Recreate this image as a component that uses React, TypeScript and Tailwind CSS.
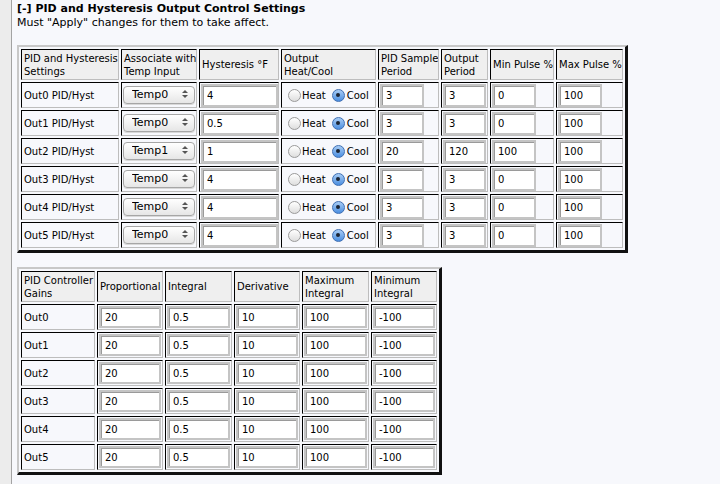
import React from 'react';

type HystRow = {
  name: string;
  temp: string;
  hyst: string;
  sample: string;
  period: string;
  min: string;
  max: string;
};

const hystRows: HystRow[] = [
  { name: 'Out0 PID/Hyst', temp: 'Temp0', hyst: '4', sample: '3', period: '3', min: '0', max: '100' },
  { name: 'Out1 PID/Hyst', temp: 'Temp0', hyst: '0.5', sample: '3', period: '3', min: '0', max: '100' },
  { name: 'Out2 PID/Hyst', temp: 'Temp1', hyst: '1', sample: '20', period: '120', min: '100', max: '100' },
  { name: 'Out3 PID/Hyst', temp: 'Temp0', hyst: '4', sample: '3', period: '3', min: '0', max: '100' },
  { name: 'Out4 PID/Hyst', temp: 'Temp0', hyst: '4', sample: '3', period: '3', min: '0', max: '100' },
  { name: 'Out5 PID/Hyst', temp: 'Temp0', hyst: '4', sample: '3', period: '3', min: '0', max: '100' },
];

const gainRows = ['Out0', 'Out1', 'Out2', 'Out3', 'Out4', 'Out5'].map(name => ({
  name,
  p: '20',
  i: '0.5',
  d: '10',
  max: '100',
  min: '-100',
}));

// inset-looking cell borders, like an old border="1" table
const cell =
  'p-0 align-middle whitespace-nowrap overflow-hidden border border-t-black border-l-black border-r-[#bdbdbd] border-b-[#bdbdbd]';
const headCell = `${cell} bg-[#efefef] pl-[2px] text-left font-normal leading-[13px]`;
const outerTable =
  'border-separate border-spacing-[2px] table-fixed border-t-2 border-l-2 border-r-[3px] border-b-[3px] border-t-[#c8c8c8] border-l-[#c8c8c8] border-r-[#111] border-b-[#111]';

const TextBox: React.FC<{ value: string; w: string; h?: string }> = ({ value, w, h = 'h-[23px]' }) => (
  <input
    type="text"
    defaultValue={value}
    className={`${w} ${h} block bg-white border-2 border-[#c4c4c4] shadow-[inset_1px_1px_0_#9a9a9a] pl-[4px] text-[10px] text-black outline-none`}
  />
);

const Radio: React.FC<{ checked?: boolean }> = ({ checked }) =>
  checked ? (
    <span className="w-[13px] h-[13px] rounded-full border border-[#3f6fb3] bg-gradient-to-b from-[#a9cdf5] to-[#4a8ee0] flex items-center justify-center shrink-0">
      <span className="w-[4px] h-[4px] rounded-full bg-[#1b2433]" />
    </span>
  ) : (
    <span className="w-[13px] h-[13px] rounded-full border border-[#9a9a9a] bg-gradient-to-b from-white to-[#dedede] shrink-0" />
  );

const TempSelect: React.FC<{ value: string }> = ({ value }) => (
  <div className="relative mx-auto w-[72px] h-[18px]">
    <select
      defaultValue={value}
      className="appearance-none w-full h-full rounded-[4px] border border-[#a6a6a6] bg-gradient-to-b from-white to-[#e6e6e6] pl-[8px] text-[11px] leading-[16px] text-black shadow-[0_1px_0_#d8d8d8] outline-none"
    >
      <option>Temp0</option>
      <option>Temp1</option>
    </select>
    <span className="pointer-events-none absolute right-[7px] top-[4px] flex flex-col gap-[2px]">
      <span className="w-0 h-0 border-x-[3px] border-x-transparent border-b-[3px] border-b-[#555]" />
      <span className="w-0 h-0 border-x-[3px] border-x-transparent border-t-[3px] border-t-[#555]" />
    </span>
  </div>
);

const App: React.FC = () => {
  return (
    <div className="w-[720px] h-[484px] overflow-hidden flex bg-[#f7f8fc] text-black font-['DejaVu_Sans',Verdana,sans-serif]">
      <div className="w-[12px] shrink-0 bg-[#ececec] border-r border-[#a3a3a3]" />

      <div className="pl-[5px] pt-[2px]">
        <h1 className="text-[11px] leading-[14px] font-bold">[-] PID and Hysteresis Output Control Settings</h1>
        <p className="text-[11px] leading-[14px]">Must "Apply" changes for them to take affect.</p>

        {/* PID / hysteresis table */}
        <table className={`${outerTable} w-[611px] mt-[15px] text-[10px]`}>
          <thead>
            <tr className="h-[31px]">
              <th className={`${headCell} w-[98px]`}>PID and Hysteresis<br />Settings</th>
              <th className={`${headCell} w-[76px]`}>Associate with<br />Temp Input</th>
              <th className={`${headCell} w-[80px]`}>Hysteresis °F</th>
              <th className={`${headCell} w-[95px]`}>Output<br />Heat/Cool</th>
              <th className={`${headCell} w-[61px]`}>PID Sample<br />Period</th>
              <th className={`${headCell} w-[47px]`}>Output<br />Period</th>
              <th className={`${headCell} w-[64px]`}>Min Pulse %</th>
              <th className={`${headCell} w-[67px]`}>Max Pulse %</th>
            </tr>
          </thead>
          <tbody>
            {hystRows.map(r => (
              <tr key={r.name} className="h-[26px]">
                <td className={`${cell} pl-[2px]`}>{r.name}</td>
                <td className={cell}>
                  <TempSelect value={r.temp} />
                </td>
                <td className={`${cell} pl-[1px]`}>
                  <TextBox value={r.hyst} w="w-[77px]" />
                </td>
                <td className={cell}>
                  <div className="flex items-center pl-[6px]">
                    <Radio />
                    <span className="ml-[1px]">Heat</span>
                    <span className="ml-[6px]">
                      <Radio checked />
                    </span>
                    <span className="ml-[2px]">Cool</span>
                  </div>
                </td>
                <td className={`${cell} pl-[1px]`}>
                  <TextBox value={r.sample} w="w-[44px]" />
                </td>
                <td className={`${cell} pl-[1px]`}>
                  <TextBox value={r.period} w="w-[43px]" />
                </td>
                <td className={`${cell} pl-[1px]`}>
                  <TextBox value={r.min} w="w-[44px]" />
                </td>
                <td className={`${cell} pl-[1px]`}>
                  <TextBox value={r.max} w="w-[44px]" />
                </td>
              </tr>
            ))}
          </tbody>
        </table>

        {/* controller gains table */}
        <table className={`${outerTable} w-[425px] mt-[14px] text-[10px]`}>
          <thead>
            <tr className="h-[31px]">
              <th className={`${headCell} w-[74px]`}>PID Controller<br />Gains</th>
              <th className={`${headCell} w-[66px]`}>Proportional</th>
              <th className={`${headCell} w-[67px]`}>Integral</th>
              <th className={`${headCell} w-[66px]`}>Derivative</th>
              <th className={`${headCell} w-[67px]`}>Maximum<br />Integral</th>
              <th className={`${headCell} w-[66px]`}>Minimum<br />Integral</th>
            </tr>
          </thead>
          <tbody>
            {gainRows.map(r => (
              <tr key={r.name} className="h-[26px]">
                <td className={`${cell} pl-[2px]`}>{r.name}</td>
                {[r.p, r.i, r.d, r.max, r.min].map((v, idx) => (
                  <td key={idx} className={`${cell} px-[1px]`}>
                    <TextBox value={v} w="w-full" h="h-[22px]" />
                  </td>
                ))}
              </tr>
            ))}
          </tbody>
        </table>
      </div>
    </div>
  );
};

export default App;
